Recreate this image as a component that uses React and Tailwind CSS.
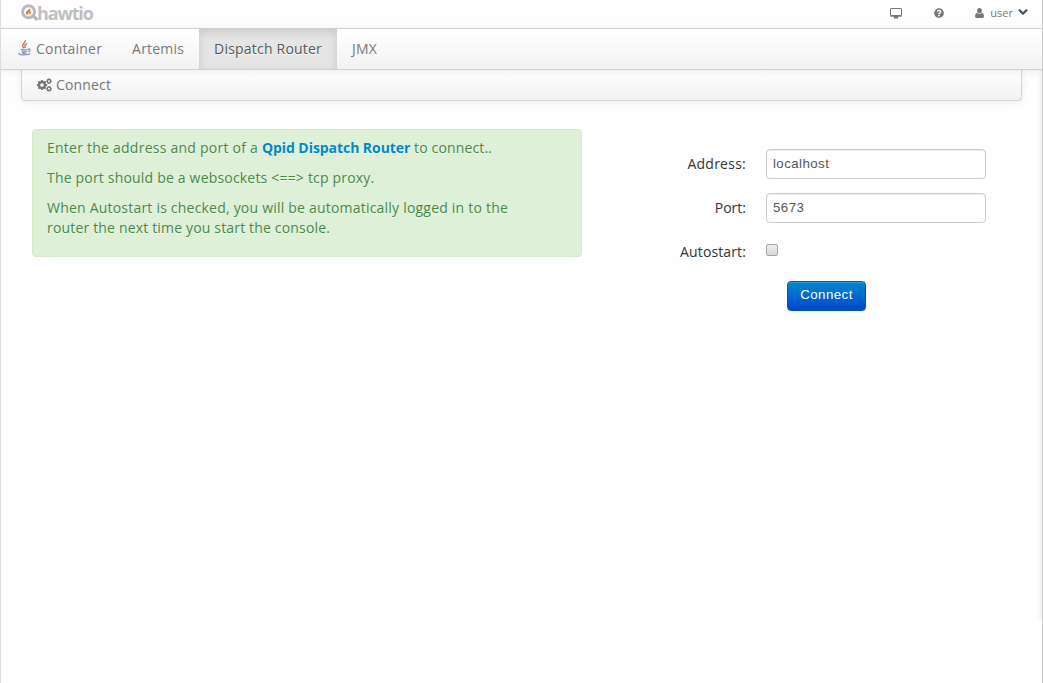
import { FaQuestionCircle, FaChevronDown } from "react-icons/fa";

function Logo() {
  return (
    <a className="flex h-[28px] items-start pl-5">
      <svg width="18" height="20" viewBox="0 0 18 20" className="mt-[3px] block shrink-0">
        <circle cx="7.600" cy="8.700" r="6" fill="none" stroke="#b9b9b9" strokeWidth="2.900" />
        <path d="M11.500 12.500 L16.500 17" stroke="#b9b9b9" strokeWidth="3.200" />
        <path d="M9 5 C8.700 7 4.800 7.600 4.800 9.800 C4.800 11.300 6.200 12 7.300 11.900 C6.700 11 7.200 10 8 9.400 C8 10.400 9.300 10.300 8.900 11.800 C10.200 11 10 9.600 9.300 8.300 C8.900 7.300 9.500 6.200 9 5Z" fill="#ee7420" />
      </svg>
      <span className="-ml-[2px] mt-[1px] font-['Open_Sans',sans-serif] text-[18px] font-bold leading-[24px] tracking-[-1.15px] text-[#c0c0c0]">hawtio</span>
    </a>
  );
}

function JavaIcon() {
  return (
    <svg width="13" height="16" viewBox="0 0 13 16" className="mr-[5px] mb-[2px] block shrink-0">
      <path d="M7.200 0.300 C8 2.800 3.600 4 4.700 6.200 C5 7 5.600 7.600 5.900 8.200 M9.300 3.500 C7.300 4.300 6.300 5.200 7 6.200 C7.500 7 7.400 7.600 6.900 8.100" fill="none" stroke="#d65c5c" strokeWidth="1.300" />
      <path d="M2.700 9.200 C4.500 10 8 10 9.700 9.300 M3.500 11.200 C5 12 7.700 12 9 11.300 M10 9.100 C12.700 8.400 12.500 11 10 11.700 M2 13 C-1 14 3 14.900 6 14.900 C9 14.900 13 14.200 11 13.200 M4 12.900 C5.500 13.500 7.700 13.400 8.700 13" fill="none" stroke="#869cba" strokeWidth="1.300" />
    </svg>
  );
}

function CogsIcon() {
  return (
    <svg width="15" height="14" viewBox="0 0 15 14" fill="none" stroke="#777" className="mr-1 block shrink-0">
      <circle cx="5" cy="7" r="3" strokeWidth="2.400" />
      <path d="M5 1.900V3.500M5 10.500V12.100M-0.100 7H1.500M8.500 7H10.100M1.400 3.400L2.600 4.600M7.400 9.400L8.600 10.600M1.400 10.600L2.600 9.400M7.400 4.600L8.600 3.400" strokeWidth="1.900" />
      <circle cx="12" cy="3.200" r="1.700" strokeWidth="1.300" />
      <path d="M12 0.300V1.400M12 5V6.100M9.100 3.200H10.200M13.800 3.200H14.900M10 1.200L10.700 1.900M13.300 4.500L14 5.200M10 5.200L10.700 4.500M13.300 1.900L14 1.200" strokeWidth="1.100" />
      <circle cx="12" cy="10.800" r="1.700" strokeWidth="1.300" />
      <path d="M12 7.900V9M12 12.600V13.700M9.100 10.800H10.200M13.800 10.800H14.900M10 8.800L10.700 9.500M13.300 12.100L14 12.800M10 12.800L10.700 12.100M13.300 9.500L14 8.800" strokeWidth="1.100" />
    </svg>
  );
}

const link = "flex h-full items-center px-[15px] text-[#777] [text-shadow:0_1px_0_#fff]";
const label = "w-[140px] pt-[5px] text-right";
const field = "ml-5 h-[30px] w-[220px] rounded-[4px] border border-[#ccc] bg-white px-[6px] pb-[2px] font-['Liberation_Sans',sans-serif] text-[13.3px] tracking-[0.42px] text-[#555] shadow-[inset_0_1px_1px_rgba(0,0,0,0.075)]";

export default function App() {
  return (
    <div className="h-[683px] w-[1043px] overflow-hidden border-l border-r border-l-[#dcdcdc] border-r-[#c8c8c8] bg-[#fefefe] font-['Open_Sans','Noto_Sans',sans-serif] text-[14px] leading-[20px] text-[#333]">
      <header className="flex h-[28px] justify-between">
        <Logo />
        <div className="flex items-center pb-[2px] pr-[14px] text-[11px] text-[#777]">
          <svg width="12" height="11" viewBox="0 0 12 11" className="mr-[32px] block">
            <path d="M1 0.500H11Q11.500 0.500 11.500 1V7.500Q11.500 8 11 8H1Q0.500 8 0.500 7.500V1Q0.500 0.500 1 0.500Z" fill="none" stroke="#777" />
            <path d="M0.500 7H11.500V8.500H8V10.500H4V8.500H0.500Z" fill="#777" />
          </svg>
          <FaQuestionCircle size={10} className="mr-[31px]" />
          <svg width="9" height="10" viewBox="0 0 9 10" className="mr-[6px] block" fill="#777">
            <ellipse cx="4.500" cy="2.700" rx="2.400" ry="2.700" />
            <path d="M2 4.800Q4.500 7.300 7 4.800Q9 5.300 9 8.300Q9 10 7.500 10H1.500Q0 10 0 8.300Q0 5.300 2 4.800Z" />
          </svg>
          <span>user</span>
          <FaChevronDown size={10} className="mb-[2px] ml-[5px] text-[#474f57]" stroke="currentColor" strokeWidth="35" />
        </div>
      </header>
      <nav className="relative z-10 flex h-[42px] border-b border-t border-[#d0d0d0] bg-linear-to-b from-white to-[#f2f2f2] pl-[2px] tracking-[0.2px] shadow-[0_1px_8px_rgba(0,0,0,0.08)]">
        <a className={link}><JavaIcon />Container</a>
        <a className={link}>Artemis</a>
        <a className="flex h-full items-center bg-[#e5e5e5] px-[15px] text-[#555] shadow-[inset_0_3px_8px_rgba(0,0,0,0.125)] [text-shadow:0_1px_0_#fff]">Dispatch Router</a>
        <a className={link}>JMX</a>
      </nav>
      <div className="flex h-[550px] items-stretch">
        <div className="min-w-0 flex-1 pl-5">
          <div className="flex h-[31px] w-[1001px] items-center rounded-b-[4px] border border-t-0 border-[#d4d4d4] bg-linear-to-b from-white to-[#f2f2f2] pl-[15px] text-[#777] shadow-[0_1px_8px_rgba(0,0,0,0.08)]">
            <CogsIcon />
            <span className="tracking-[0.15px]">Connect</span>
          </div>
          <main className="flex pl-[11px] pt-[28px]">
            <section className="h-[128px] w-[550px] shrink-0 rounded-[4px] border border-[#d6e9c6] bg-[#dff0d8] py-[8px] pl-[14px] pr-[35px] text-[#468847] [text-shadow:0_1px_0_rgba(255,255,255,0.5)]">
              <p className="mb-[10px] whitespace-nowrap tracking-[0.24px]">Enter the address and port of a <b className="tracking-[-0.06px] text-[#0088cc]">Qpid Dispatch Router</b><span className="tracking-[0.15px]"> to connect..</span></p>
              <p className="mb-[10px] whitespace-nowrap tracking-[0.19px]">The port should be a websockets &lt;==&gt; tcp proxy.</p>
              <p className="whitespace-nowrap tracking-[0.21px]">When Autostart is checked, you will be automatically logged in to the<br /><span className="tracking-[0.17px]">router the next time you start the console.</span></p>
            </section>
            <form className="pl-[24px] pt-[20px]">
              <div className="mb-[14px] flex h-[30px]">
                <label htmlFor="address" className={label}><span className="tracking-[0.25px]">Address:</span></label>
                <input id="address" defaultValue="localhost" className={field} />
              </div>
              <div className="mb-[14px] flex h-[30px]">
                <label htmlFor="port" className={label}>Port:</label>
                <input id="port" defaultValue="5673" className={field} />
              </div>
              <div className="mb-[14px] flex h-[30px]">
                <label htmlFor="autostart" className={label}><span className="tracking-[0.12px]">Autostart:</span></label>
                <input id="autostart" type="checkbox" className="ml-5 mt-[7px] h-3 w-3 appearance-none rounded-[2px] border border-[#a5a5a5] bg-linear-to-b from-[#eee] to-[#d8d8d8]" />
              </div>
              <button type="button" className="ml-[181px] block h-[30px] w-[79px] rounded-[4px] border border-[#0055aa] bg-linear-to-b from-[#0088cc] to-[#0044cc] pb-[3px] font-['Liberation_Sans',sans-serif] text-[13.3px] tracking-[0.45px] text-white shadow-[inset_0_1px_0_rgba(255,255,255,0.2),0_1px_2px_rgba(0,0,0,0.05)]">Connect</button>
            </form>
          </main>
        </div>
        <div className="w-[5px] shrink-0 bg-linear-to-r from-transparent to-[#f1f1f1]" />
      </div>
    </div>
  );
}
